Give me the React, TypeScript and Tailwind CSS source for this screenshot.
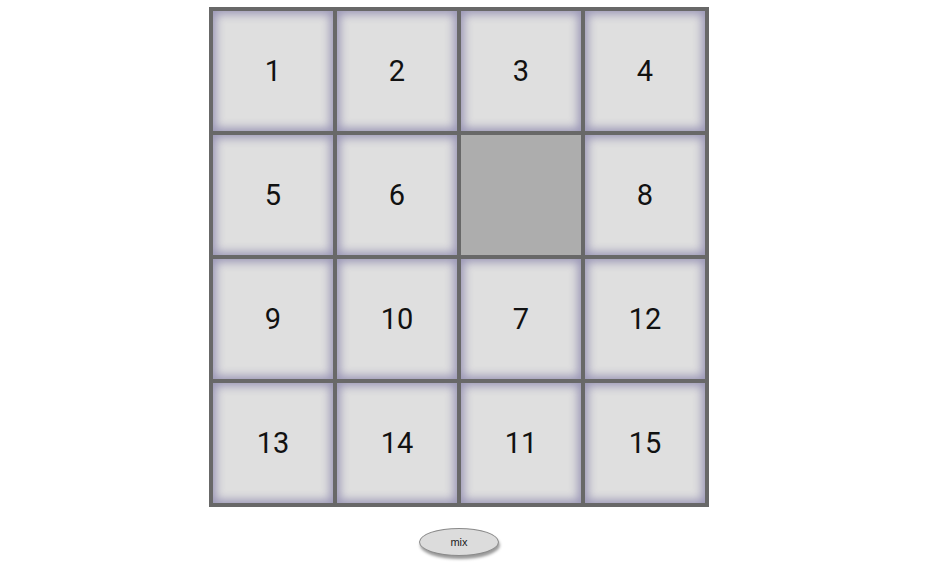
const tiles = [1, 2, 3, 4, 5, 6, 0, 8, 9, 10, 7, 12, 13, 14, 11, 15];

export default function App() {
  return (
    <div className="min-h-[571px] bg-white pl-[209px] pt-[7px] font-['Roboto',sans-serif]">
      <div className="flex w-[500px] flex-col items-center">
        <div className="grid w-[500px] grid-cols-4 border-2 border-[#686868] bg-[#686868]">
          {tiles.map((n) =>
            n === 0 ? (
              <div key={n} className="h-[124px] w-[124px] border-2 border-[#686868] bg-[#adadad]" />
            ) : (
              <div
                key={n}
                className="flex h-[124px] w-[124px] items-center justify-center border-2 border-[#686868] bg-[#dfdfdf] pt-[2px] text-[29px] text-[#111] shadow-[inset_0_0_10px_3px_#9a96b6]"
              >
                {n}
              </div>
            )
          )}
        </div>
        <button className="mt-[21px] h-[28px] w-[80px] rounded-[50%] border border-[#8a8a8a] bg-[#dcdcdc] font-['Liberation_Sans',sans-serif] text-[11px] text-[#222] shadow-[1px_3px_3px_#999]">
          mix
        </button>
      </div>
    </div>
  );
}
